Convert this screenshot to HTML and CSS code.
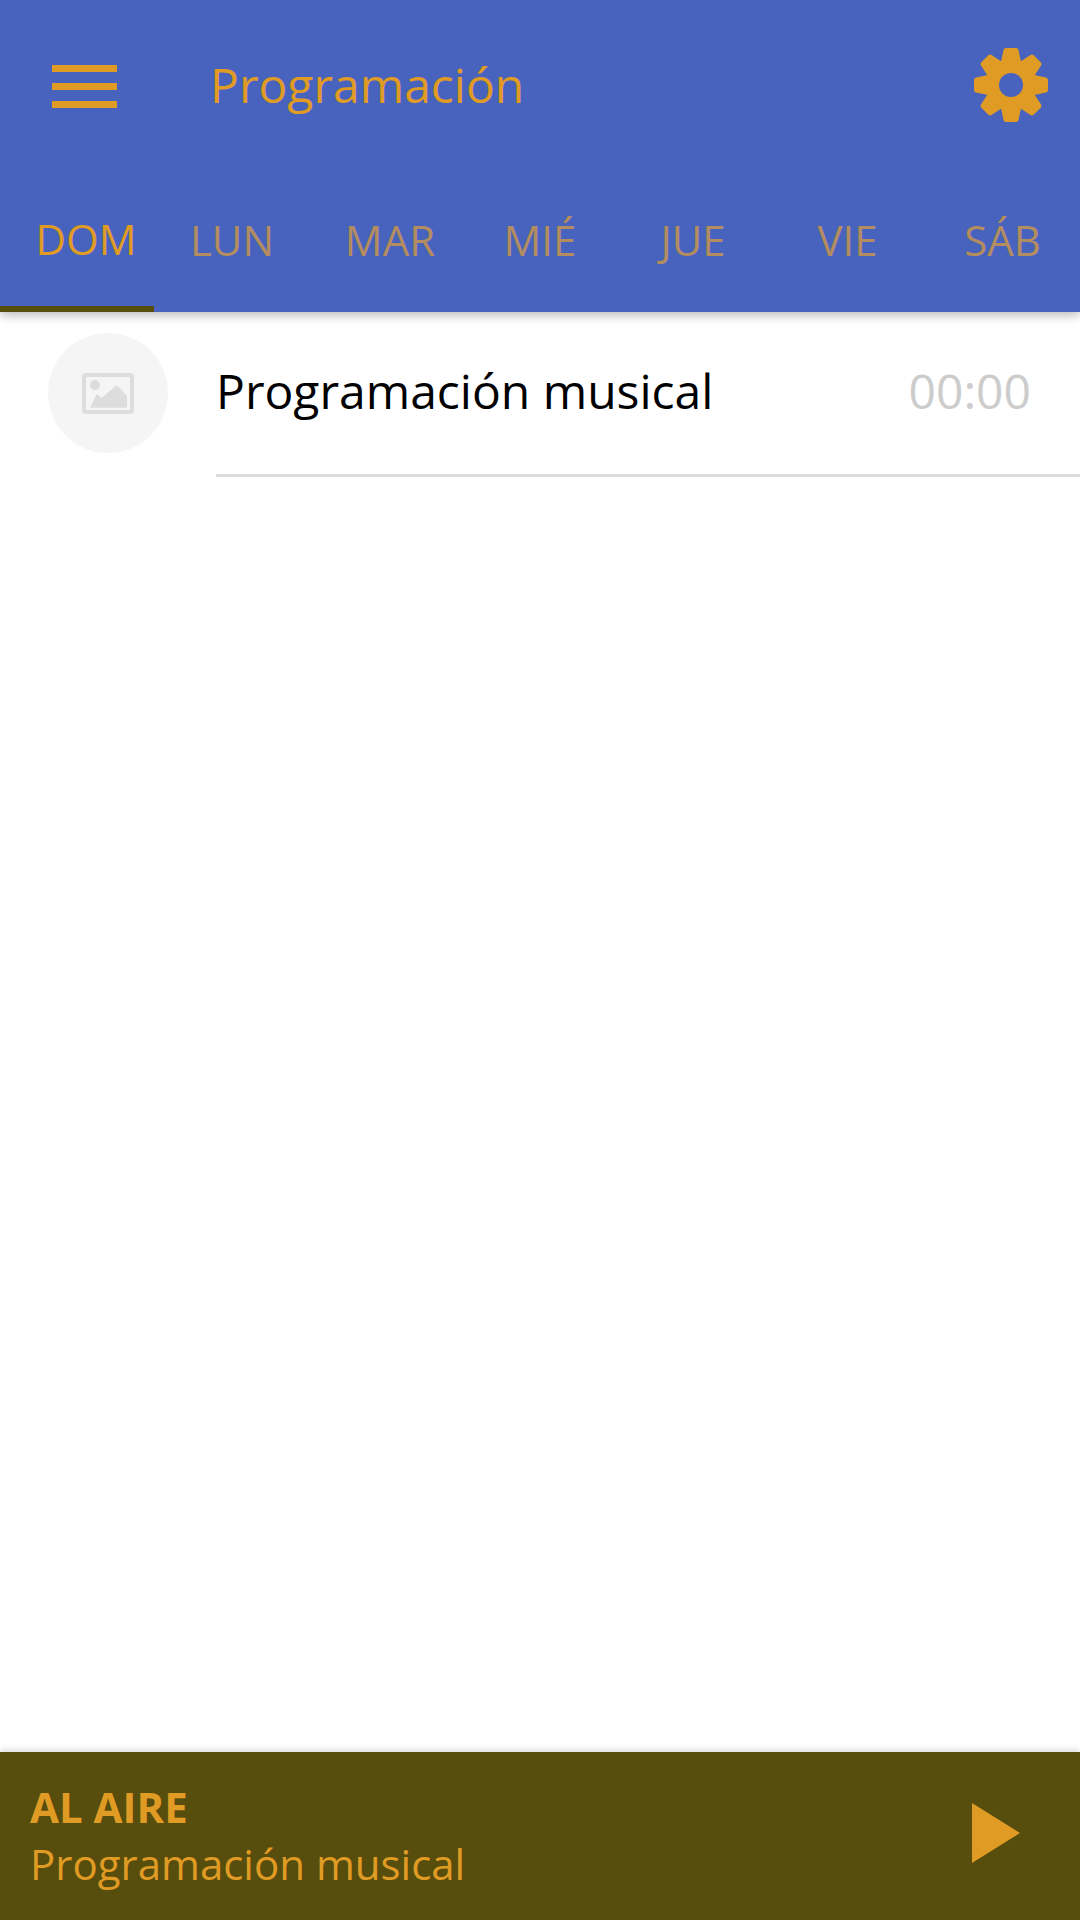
FILE: index.html
```html
<!DOCTYPE html>
<html lang="es">
<head>
<meta charset="utf-8">
<title>Programación</title>
<link rel="stylesheet" href="styles.css">
</head>
<body>
<div class="app">
  <header class="header">
    <div class="toolbar">
      <div class="menu" aria-label="Menú"><span></span><span></span><span></span></div>
      <h1 class="title">Programación</h1>
      <svg class="gear" viewBox="-40 -40 80 80" aria-label="Ajustes">
        <g class="gear-body">
          <circle r="26"/>
          <path d="M-10 -23 L-7.5 -35 Q-7 -37 -5 -37 L5 -37 Q7 -37 7.5 -35 L10 -23 Z"/>
          <path transform="rotate(45)" d="M-10 -23 L-7.5 -35 Q-7 -37 -5 -37 L5 -37 Q7 -37 7.5 -35 L10 -23 Z"/>
          <path transform="rotate(90)" d="M-10 -23 L-7.5 -35 Q-7 -37 -5 -37 L5 -37 Q7 -37 7.5 -35 L10 -23 Z"/>
          <path transform="rotate(135)" d="M-10 -23 L-7.5 -35 Q-7 -37 -5 -37 L5 -37 Q7 -37 7.5 -35 L10 -23 Z"/>
          <path transform="rotate(180)" d="M-10 -23 L-7.5 -35 Q-7 -37 -5 -37 L5 -37 Q7 -37 7.5 -35 L10 -23 Z"/>
          <path transform="rotate(225)" d="M-10 -23 L-7.5 -35 Q-7 -37 -5 -37 L5 -37 Q7 -37 7.5 -35 L10 -23 Z"/>
          <path transform="rotate(270)" d="M-10 -23 L-7.5 -35 Q-7 -37 -5 -37 L5 -37 Q7 -37 7.5 -35 L10 -23 Z"/>
          <path transform="rotate(315)" d="M-10 -23 L-7.5 -35 Q-7 -37 -5 -37 L5 -37 Q7 -37 7.5 -35 L10 -23 Z"/>
        </g>
        <circle class="gear-hole" r="12"/>
      </svg>
    </div>
    <nav class="tabs">
      <div class="tab active">DOM</div>
      <div class="tab">LUN</div>
      <div class="tab">MAR</div>
      <div class="tab">MIÉ</div>
      <div class="tab">JUE</div>
      <div class="tab">VIE</div>
      <div class="tab">SÁB</div>
    </nav>
  </header>
  <main class="list">
    <div class="row">
      <div class="thumb">
        <svg class="thumb-icon" viewBox="0 0 52 41">
          <rect class="frame" x="2" y="2" width="48" height="37" rx="2"/>
          <circle class="pic" cx="13" cy="12" r="5"/>
          <polygon class="pic" points="8,34.7 14.7,21 19.7,25 34.7,12 45,23 45,34.7"/>
        </svg>
      </div>
      <div class="row-body">
        <span class="row-title">Programación musical</span>
        <span class="row-time">00:00</span>
      </div>
    </div>
  </main>
  <footer class="player">
    <div class="now">
      <div class="now-label">AL AIRE</div>
      <div class="now-title">Programación musical</div>
    </div>
    <svg class="play" viewBox="0 0 48 60" aria-label="Reproducir"><polygon points="0,0 48,30 0,60"/></svg>
  </footer>
</div>
</body>
</html>
```
FILE: styles.css
```css
* { box-sizing: border-box; }
html, body { margin: 0; padding: 0; }
body { font-family: "Open Sans", sans-serif; background: #fff; }
.app { width: 1080px; height: 1920px; display: flex; flex-direction: column; overflow: hidden; }

.header { height: 312px; background: #4763bd; box-shadow: 0 3px 10px rgba(0,0,0,.28); position: relative; z-index: 1; display: flex; flex-direction: column; }
.toolbar { height: 170px; display: flex; align-items: center; padding: 0 29px 0 52px; }
.menu { width: 65px; height: 43px; margin-top: 2px; display: flex; flex-direction: column; justify-content: space-between; }
.menu span { display: block; height: 7px; background: #e09b24; }
.title { flex: 1; margin: 0 0 0 93px; font-size: 48px; font-weight: 400; color: #e09b24; line-height: 1; }
.gear { width: 80px; height: 80px; display: block; }
.gear-body { fill: #e09b24; }
.gear-hole { fill: #4763bd; }

.tabs { flex: 1; display: grid; grid-template-columns: 154px 156px 160px 140px 166px 143px 161px; }
.tab { display: flex; align-items: center; justify-content: center; font-size: 42px; color: #b38d5f; padding-bottom: 3px; }
.tab:last-child { padding-left: 6px; }
.tab.active { color: #e09b24; border-bottom: 6px solid #574d0d; padding: 0 0 0 18px; white-space: nowrap; }

.list { flex: 1; }
.row { height: 165px; display: flex; align-items: flex-start; padding: 21px 0 0 48px; }
.thumb { width: 120px; height: 120px; border-radius: 50%; background: #f5f5f5; display: flex; align-items: center; justify-content: center; flex: none; }
.thumb-icon { width: 52px; height: 41px; display: block; }
.frame { fill: none; stroke: #ddd; stroke-width: 4; }
.pic { fill: #ddd; }
.row-body { flex: 1; margin-left: 48px; height: 165px; margin-top: -21px; border-bottom: 3px solid #ddd; display: flex; align-items: center; justify-content: space-between; padding: 0 49px 5px 0; }
.row-title { font-size: 48px; color: #000; }
.row-time { font-size: 48px; color: #ccc; }

.player { height: 168px; background: #574d0d; box-shadow: 0 -2px 6px rgba(0,0,0,.15); display: flex; align-items: center; justify-content: space-between; padding: 0 60px 0 30px; }
.now { display: flex; flex-direction: column; }
.now-label { font-size: 42px; font-weight: 700; color: #e09b24; line-height: 57px; margin-top: -1px; }
.now-title { font-size: 42px; color: #e09b24; line-height: 58px; }
.play { width: 48px; height: 60px; display: block; fill: #e09b24; margin-top: -6px; }
```
